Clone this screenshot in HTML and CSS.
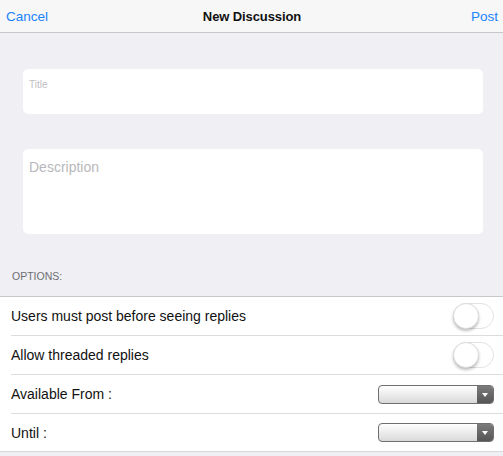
FILE: index.html
```html
<!DOCTYPE html>
<html>
<head>
<meta charset="utf-8">
<link rel="stylesheet" href="styles.css">
</head>
<body>
<div class="navbar">
  <span class="nav-btn left">Cancel</span>
  <span class="nav-title">New Discussion</span>
  <span class="nav-btn right">Post</span>
</div>
<div class="content">
  <div class="field field-title"><span class="ph-small">Title</span></div>
  <div class="field field-desc"><span class="ph">Description</span></div>
  <div class="section-label">OPTIONS:</div>
  <div class="list">
    <div class="row">
      <span class="label">Users must post before seeing replies</span>
      <span class="toggle"><span class="knob"></span></span>
    </div>
    <div class="row">
      <span class="label">Allow threaded replies</span>
      <span class="toggle"><span class="knob"></span></span>
    </div>
    <div class="row">
      <span class="label">Available From :</span>
      <span class="select"><span class="arrow"></span></span>
    </div>
    <div class="row last">
      <span class="label">Until :</span>
      <span class="select"><span class="arrow"></span></span>
    </div>
  </div>
</div>
</body>
</html>
```
FILE: styles.css
```css
html, body {
  margin: 0;
  padding: 0;
}
body {
  width: 503px;
  height: 456px;
  overflow: hidden;
  background: #efeff4;
  font-family: "Liberation Sans", Arial, sans-serif;
  color: #000;
}
.navbar {
  height: 32px;
  background: #f7f7f7;
  border-bottom: 1px solid #c8c7cc;
  display: grid;
  grid-template-columns: 1fr auto 1fr;
  align-items: center;
  padding: 0 5px 0 6px;
}
.nav-btn {
  color: #1a82fb;
  font-size: 13.5px;
}
.nav-btn.right {
  justify-self: end;
}
.nav-title {
  font-size: 13px;
  font-weight: bold;
  letter-spacing: -0.1px;
  color: #111;
}
.content {
  padding: 36px 20px 0 23px;
}
.field {
  width: 460px;
  background: #fff;
  border-radius: 5px;
  box-sizing: border-box;
  padding-left: 6px;
}
.field-title {
  height: 45px;
  padding-top: 7px;
  line-height: 14px;
}
.field-desc {
  height: 85px;
  margin-top: 35px;
  padding-top: 9px;
}
.ph-small {
  font-size: 10px;
  color: #c0c0c4;
}
.ph {
  font-size: 14px;
  color: #b8b8bc;
}
.section-label {
  font-size: 10.5px;
  color: #6d6d72;
  margin: 0 0 0 -11px;
  padding-top: 36px;
  height: 26px;
}
.list {
  margin: 0 -20px 0 -23px;
  background: #fff;
  border-top: 1px solid #c8c7cc;
  border-bottom: 1px solid #d8d8dc;
  padding-left: 11px;
}
.row {
  height: 38px;
  display: flex;
  align-items: center;
  justify-content: space-between;
  border-bottom: 1px solid #dcdcdf;
  padding-right: 9px;
}
.row.last {
  border-bottom: none;
  height: 37px;
}
.label {
  font-size: 14px;
  color: #111;
}
.toggle {
  width: 39px;
  height: 24px;
  border-radius: 13px;
  border: 1px solid #e3e3e6;
  background: #fff;
  position: relative;
}
.knob {
  position: absolute;
  left: -1px;
  top: -1px;
  width: 24px;
  height: 24px;
  border-radius: 50%;
  background: #fff;
  border: 1px solid #dcdcdc;
  box-shadow: 0 2px 3px rgba(0,0,0,0.25);
}
.select {
  width: 114px;
  height: 17px;
  border: 1px solid #6f6f6f;
  border-radius: 4px;
  background: linear-gradient(#ffffff, #d9d9d9);
  position: relative;
  overflow: hidden;
}
.arrow {
  position: absolute;
  right: 0;
  top: 0;
  width: 16px;
  height: 17px;
  background: linear-gradient(#7b7b7b, #555);
}
.arrow::after {
  content: "";
  position: absolute;
  left: 5px;
  top: 7px;
  border-left: 3px solid transparent;
  border-right: 3px solid transparent;
  border-top: 4px solid #fff;
}
```
